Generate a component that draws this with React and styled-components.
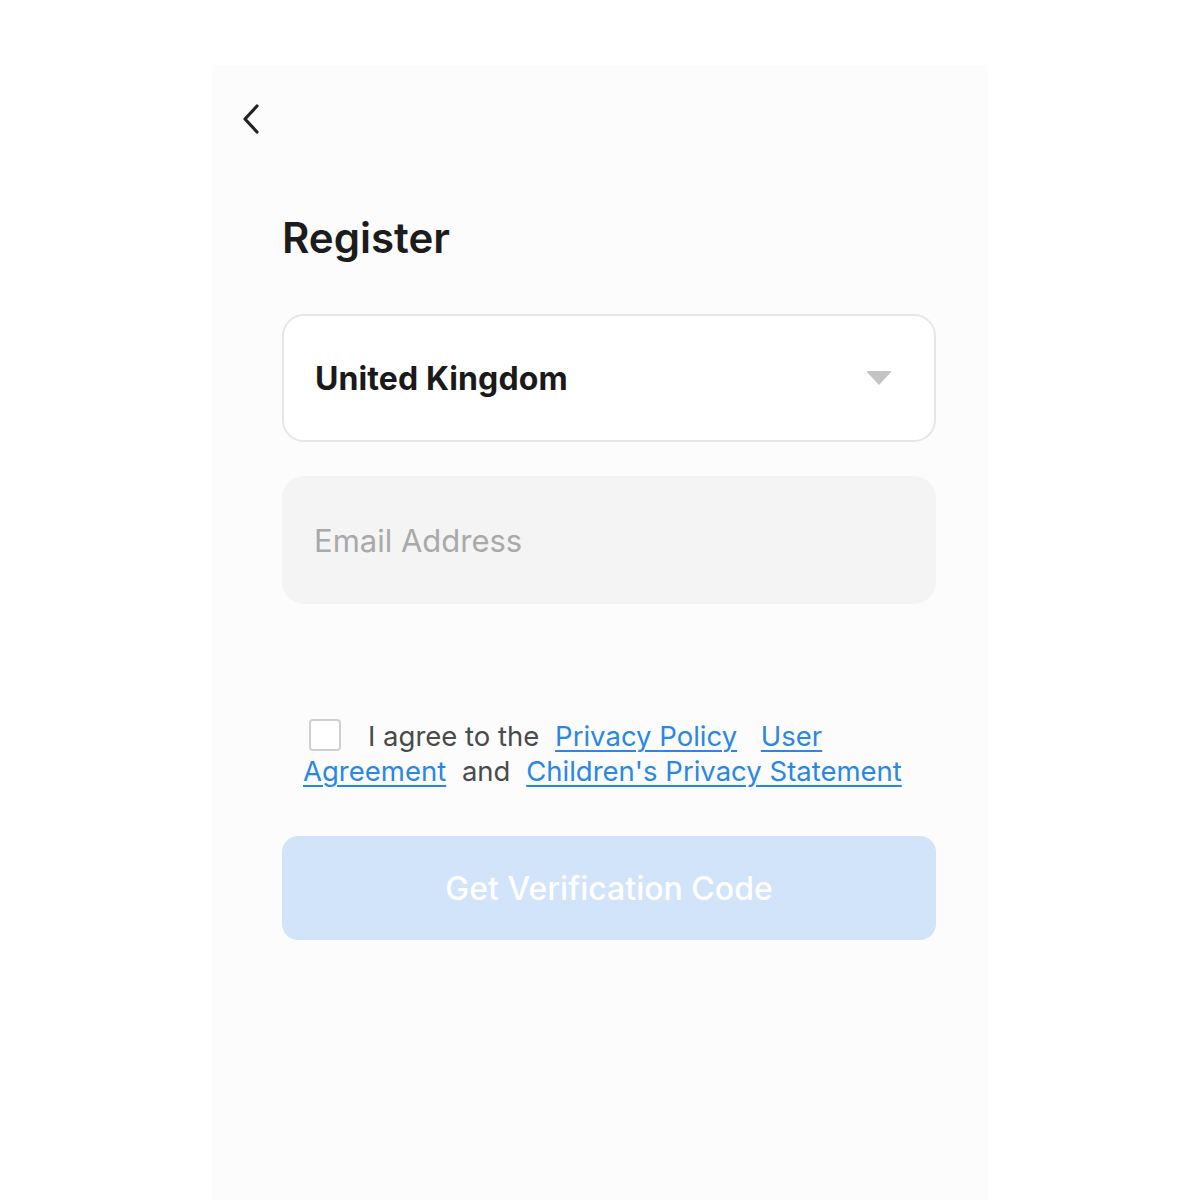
import React from "react";
import styled, { createGlobalStyle } from "styled-components";

const GlobalStyle = createGlobalStyle`
  html, body {
    margin: 0;
    padding: 0;
    background: #ffffff;
  }
  body {
    font-family: Inter, Roboto, "Liberation Sans", sans-serif;
  }
`;

const App = () => {
  return (
    <Page>
      <GlobalStyle />
      <Phone>
        <BackButton aria-label="back">
          <svg width="22" height="32" viewBox="0 0 22 32" fill="none">
            <path
              d="M17 3 L5 16 L17 29"
              stroke="#222"
              strokeWidth="3.2"
              strokeLinecap="round"
              strokeLinejoin="round"
            />
          </svg>
        </BackButton>
        <Form>
          <Title>Register</Title>
          <Select>
            <span>United Kingdom</span>
            <Caret />
          </Select>
          <Input placeholder="Email Address" />
          <Agreement>
            <Check type="checkbox" />
            <Plain>I agree to the</Plain>{" "}
            <TermLink href="#">Privacy Policy</TermLink>{" "}
            <TermLink href="#">User Agreement</TermLink>{" "}
            <Plain>and</Plain>{" "}
            <TermLink href="#">Children's Privacy Statement</TermLink>
          </Agreement>
          <SubmitButton disabled>Get Verification Code</SubmitButton>
        </Form>
      </Phone>
    </Page>
  );
};

const Page = styled.div`
  display: flex;
  justify-content: center;
  padding-top: 65px;
  min-height: 1200px;
  box-sizing: border-box;
`;

const Phone = styled.div`
  width: 776px;
  min-height: 1135px;
  background: #fcfcfc;
  padding: 38px 0 0 28px;
  box-sizing: border-box;
`;

const BackButton = styled.button`
  display: block;
  border: none;
  background: none;
  padding: 0;
  width: 22px;
  height: 32px;
  cursor: pointer;
`;

const Form = styled.div`
  display: flex;
  flex-direction: column;
  width: 654px;
  margin: 78px 0 0 42px;
`;

const Title = styled.h1`
  margin: 0 0 51px;
  font-size: 42px;
  font-weight: 600;
  color: #1c1c1c;
  line-height: 50px;
`;

const Select = styled.div`
  display: flex;
  align-items: center;
  justify-content: space-between;
  height: 128px;
  padding: 0 42px 0 31px;
  border: 2px solid #e6e6e6;
  border-radius: 22px;
  background: #ffffff;
  box-sizing: border-box;
  font-size: 32px;
  font-weight: 700;
  color: #1a1a1a;
  letter-spacing: 0.1px;
`;

const Caret = styled.span`
  width: 0;
  height: 0;
  border-left: 13px solid transparent;
  border-right: 13px solid transparent;
  border-top: 14px solid #c4c4c4;
  border-radius: 2px;
`;

const Input = styled.input`
  margin-top: 34px;
  height: 128px;
  padding: 0 32px;
  border: none;
  border-radius: 22px;
  background: #f4f4f4;
  box-sizing: border-box;
  font-family: Inter, Roboto, "Liberation Sans", sans-serif;
  font-size: 31px;
  color: #1a1a1a;
  outline: none;
  &::placeholder {
    color: #a9a9a9;
  }
`;

const Agreement = styled.p`
  margin: 115px 0 0 21px;
  width: 630px;
  font-size: 27.5px;
  line-height: 35px;
  color: #4a4a4a;
`;

const Check = styled.input`
  appearance: none;
  display: inline-block;
  vertical-align: -5px;
  width: 32px;
  height: 32px;
  margin: 0 19px 0 6px;
  border: 2px solid #cfcfcf;
  border-radius: 4px;
  background: #ffffff;
  box-sizing: border-box;
`;

const Plain = styled.span`
  margin: 0 8px;
`;

const TermLink = styled.a`
  color: #2a87e6;
  text-decoration: underline;
  text-underline-offset: 4px;
  text-decoration-thickness: 2px;

  & + & {
    margin-left: 16px;
  }
`;

const SubmitButton = styled.button`
  margin-top: 47px;
  height: 104px;
  border: none;
  border-radius: 16px;
  background: #d2e4fa;
  color: #ffffff;
  font-family: Inter, Roboto, "Liberation Sans", sans-serif;
  font-size: 32px;
  font-weight: 500;
`;

export default App;
